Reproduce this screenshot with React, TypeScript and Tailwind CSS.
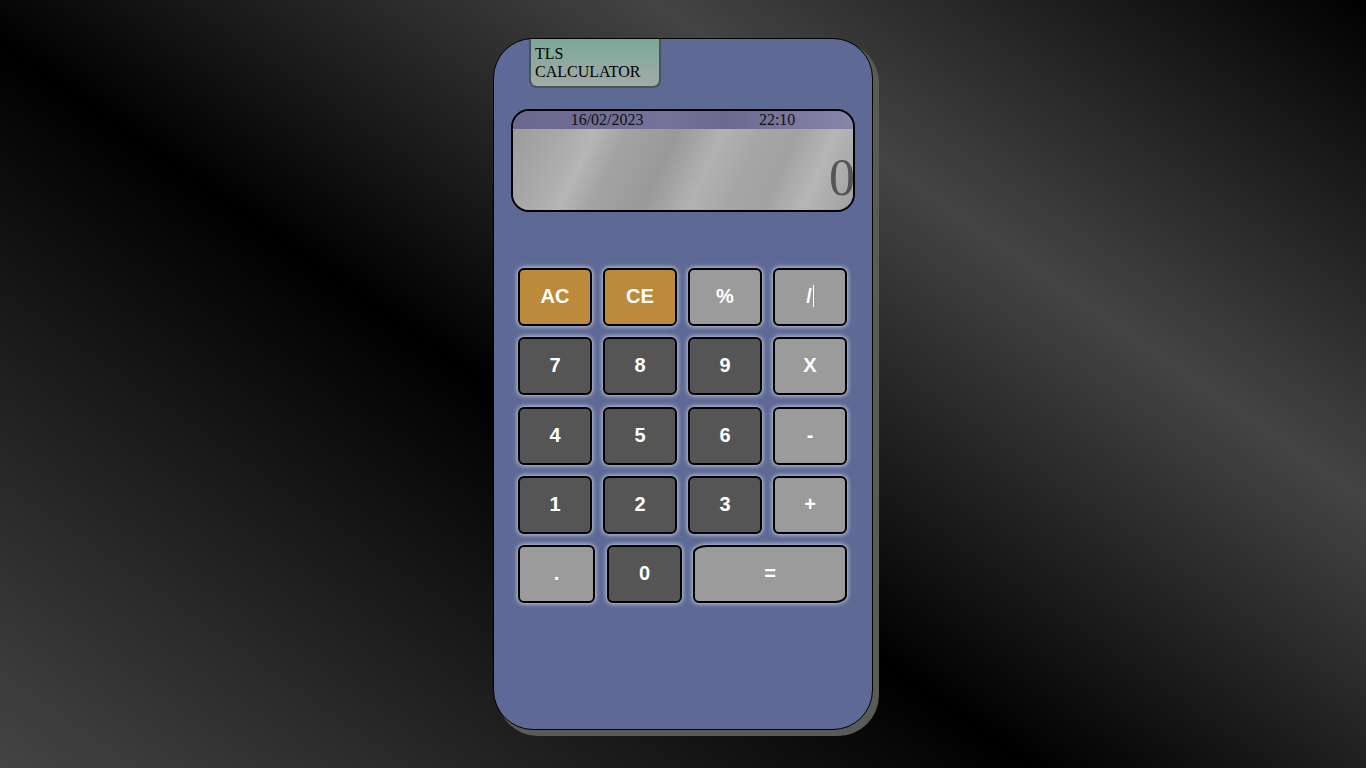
const keys = [
  { label: "AC", tone: "gold" },
  { label: "CE", tone: "gold" },
  { label: "%", tone: "light" },
  { label: "/", tone: "light" },
  { label: "7", tone: "dark" },
  { label: "8", tone: "dark" },
  { label: "9", tone: "dark" },
  { label: "X", tone: "light" },
  { label: "4", tone: "dark" },
  { label: "5", tone: "dark" },
  { label: "6", tone: "dark" },
  { label: "-", tone: "light" },
  { label: "1", tone: "dark" },
  { label: "2", tone: "dark" },
  { label: "3", tone: "dark" },
  { label: "+", tone: "light" },
];

const toneClass: Record<string, string> = {
  gold: "bg-[#bb8b3b]",
  light: "bg-[#9b9b9b]",
  dark: "bg-[#555555]",
};

function Key({ label, tone, className = "" }: { label: string; tone: string; className?: string }) {
  return (
    <button
      className={`flex h-[58px] items-center justify-center rounded-[6px] border-2 border-black pb-[2px] text-[20px] font-bold text-white shadow-[0_0_4px_1px_rgba(220,225,240,0.75)] ${toneClass[tone]} ${className}`}
      style={{ fontFamily: "Arial, 'Liberation Sans', sans-serif" }}
    >
      {label}
      {label === "/" && <span className="ml-[1px] inline-block h-[22px] w-[1px] bg-white" />}
    </button>
  );
}

export default function App() {
  return (
    <div className="flex min-h-screen justify-center bg-[linear-gradient(215deg,#000000_0%,#444444_29%,#000000_58%,#444444_100%)] pt-[38px]">
      <div className="flex h-[692px] w-[380px] flex-col rounded-[40px] border border-black bg-[#5e6a95] shadow-[5px_5px_0_1px_#5a5b57]">
        {/* title tab */}
        <div
          className="ml-[35px] h-[49px] w-[132px] rounded-b-[8px] border-2 border-t-0 border-[#45555a] bg-[linear-gradient(180deg,#79a99a_0%,#a6a9a7_100%)] pl-[4px] pt-[6px] text-[16px] leading-[18px] text-black"
          style={{ fontFamily: "'Liberation Serif', 'Times New Roman', serif" }}
        >
          TLS
          <br />
          CALCULATOR
        </div>

        {/* display */}
        <div
          className="mx-[17px] mt-[21px] flex h-[103px] flex-col overflow-hidden rounded-[18px] border-2 border-black"
          style={{ fontFamily: "'Liberation Serif', 'Times New Roman', serif" }}
        >
          <div className="flex h-[18px] items-center justify-around bg-[linear-gradient(90deg,#6a6790_0%,#76729b_45%,#6c6890_62%,#8985a9_100%)] text-[16px] leading-none text-[#111]">
            <span>16/02/2023</span>
            <span>22:10</span>
          </div>
          <div className="flex flex-1 items-end justify-end bg-[linear-gradient(115deg,#9c9c9c_0%,#aaaaaa_14%,#b6b6b6_22%,#a3a3a3_30%,#999999_44%,#b2b2b2_56%,#a6a6a6_66%,#a2a2a2_76%,#b6b6b6_86%,#a0a0a0_100%)] pb-[6px]">
            <span className="mr-[-2px] text-[52px] leading-none text-[#555555]">0</span>
          </div>
        </div>

        {/* keypad */}
        <div className="mx-[24px] mt-[56px] flex flex-col gap-y-[11.25px]">
          <div className="grid grid-cols-[repeat(4,74px)] gap-x-[11px] gap-y-[11.25px]">
            {keys.map((k) => (
              <Key key={k.label} label={k.label} tone={k.tone} />
            ))}
          </div>
          <div className="flex">
            <Key label="." tone="light" className="w-[77px]" />
            <Key label="0" tone="dark" className="ml-[12px] w-[75px]" />
            <Key label="=" tone="light" className="ml-[11px] w-[154px] rounded-[14px_6px_12px_6px/8px_6px_8px_6px]" />
          </div>
        </div>
      </div>
    </div>
  );
}
